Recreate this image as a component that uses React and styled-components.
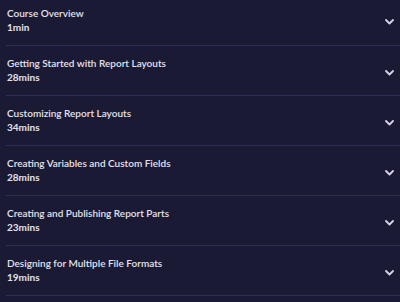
import React from "react";
import styled, { createGlobalStyle } from "styled-components";

const GlobalStyle = createGlobalStyle`
  html, body {
    margin: 0;
    padding: 0;
    background: #1b1a35;
    font-family: Lato, "Noto Sans", sans-serif;
  }
`;

const Page = styled.div`
  width: 400px;
  height: 302px;
  overflow: hidden;
  background: #1b1a35;
`;

const List = styled.ul`
  list-style: none;
  margin: 0;
  padding: 0 0 0 6px;
`;

const Row = styled.li`
  display: flex;
  align-items: center;
  justify-content: space-between;
  height: 50px;
  box-sizing: border-box;
  padding: 0 6px 0 1px;
  border-bottom: 1px solid #2f2d55;

  &:first-child {
    height: 46px;
    padding-bottom: 5px;
  }

  svg {
    margin-top: 4px;
  }
`;

const Info = styled.div`
  display: flex;
  flex-direction: column;
  gap: 3px;
`;

const Title = styled.span`
  font-size: 10px;
  font-weight: 600;
  color: #e3e2ec;
  line-height: 11px;
`;

const Duration = styled.span`
  font-size: 10px;
  font-weight: 700;
  color: #e3e2ec;
  line-height: 11px;
`;

const Chevron = () => (
  <svg width="9" height="6" viewBox="0 0 9 6" fill="none">
    <path d="M1 1 L4.5 4.5 L8 1" stroke="#d6d4e6" strokeWidth="1.8" strokeLinecap="round" strokeLinejoin="round" />
  </svg>
);

const courses = [
  { title: "Course Overview", time: "1min" },
  { title: "Getting Started with Report Layouts", time: "28mins" },
  { title: "Customizing Report Layouts", time: "34mins" },
  { title: "Creating Variables and Custom Fields", time: "28mins" },
  { title: "Creating and Publishing Report Parts", time: "23mins" },
  { title: "Designing for Multiple File Formats", time: "19mins" },
];

const App = () => (
  <Page>
    <GlobalStyle />
    <List>
      {courses.map((c) => (
        <Row key={c.title}>
          <Info>
            <Title>{c.title}</Title>
            <Duration>{c.time}</Duration>
          </Info>
          <Chevron />
        </Row>
      ))}
    </List>
  </Page>
);

export default App;
